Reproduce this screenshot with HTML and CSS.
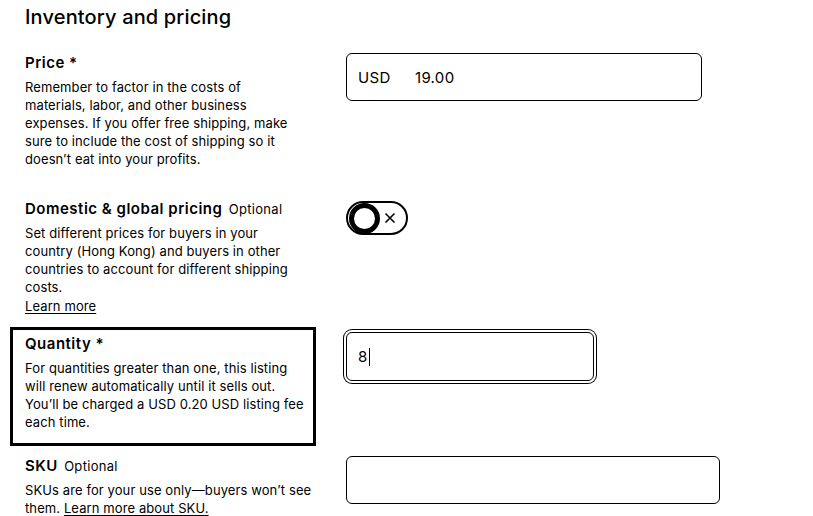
FILE: index.html
```html
<!DOCTYPE html>
<html>
<head>
<meta charset="utf-8">
<link rel="stylesheet" href="styles.css">
</head>
<body>
<div class="page">
  <h1 class="title">Inventory and pricing</h1>

  <div class="row row-price">
    <div class="info">
      <div class="label">Price <span class="req">*</span></div>
      <p class="desc">Remember to factor in the costs of materials, labor, and other business expenses. If you offer free shipping, make sure to include the cost of shipping so it doesn’t eat into your profits.</p>
    </div>
    <div class="field">
      <div class="input input-price"><span class="cur">USD</span><span class="val">19.00</span></div>
    </div>
  </div>

  <div class="row row-domestic">
    <div class="info">
      <div class="label">Domestic &amp; global pricing <span class="opt">Optional</span></div>
      <p class="desc">Set different prices for buyers in your country (Hong Kong) and buyers in other countries to account for different shipping costs.</p>
      <a class="link">Learn more</a>
    </div>
    <div class="field">
      <div class="toggle">
        <span class="knob"></span>
        <svg class="x" width="12" height="12" viewBox="0 0 12 12"><path d="M1.5 1.5 L10.5 10.5 M10.5 1.5 L1.5 10.5" stroke="#000" stroke-width="1.6" fill="none"/></svg>
      </div>
    </div>
  </div>

  <div class="row row-qty">
    <div class="info info-focus">
      <div class="label">Quantity <span class="req">*</span></div>
      <p class="desc">For quantities greater than one, this listing will renew automatically until it sells out. You’ll be charged a USD 0.20 USD listing fee each time.</p>
    </div>
    <div class="field">
      <div class="input input-qty"><span class="val">8</span><span class="caret"></span></div>
    </div>
  </div>

  <div class="row row-sku">
    <div class="info">
      <div class="label">SKU <span class="opt">Optional</span></div>
      <p class="desc">SKUs are for your use only—buyers won’t see them. <a class="link">Learn more about SKU.</a></p>
    </div>
    <div class="field">
      <div class="input input-sku"></div>
    </div>
  </div>
</div>
</body>
</html>
```

FILE: styles.css
```css
* { box-sizing: border-box; }
html, body { margin: 0; padding: 0; background: #fff; }
body {
  font-family: Inter, "Noto Sans", "Liberation Sans", sans-serif;
  color: #000;
  width: 813px;
  height: 516px;
  overflow: hidden;
}
.page { padding: 3px 0 0 25px; }
.title {
  margin: 0;
  font-size: 20px;
  line-height: 28px;
  font-weight: 500;
  letter-spacing: 0.15px;
}
.row {
  display: flex;
  align-items: flex-start;
}
.info { width: 276px; flex: none; }
.field { margin-left: 45px; }
.label {
  font-size: 15px;
  line-height: 20px;
  font-weight: 600;
  letter-spacing: 0.5px;
  white-space: nowrap;
}
.opt { font-size: 13px; font-weight: 400; margin-left: 2px; letter-spacing: 0.3px; }
.desc {
  margin: 5px 0 0;
  font-size: 13px;
  line-height: 18px;
  letter-spacing: 0.1px;
}
.link { color: #000; text-decoration: underline; text-underline-offset: 2px; font-size: 13px; line-height: 18px; letter-spacing: 0.1px; }
.row-domestic .link { display: block; margin-top: 1px; }

.row-price { margin-top: 22px; }
.row-domestic { margin-top: 31px; }
.row-qty { margin-top: 12px; }
.row-sku { margin-top: 10px; }
.row-sku .info { width: 290px; }
.row-sku .field { margin-left: 31px; }

.input {
  border: 1px solid #000;
  border-radius: 6px;
  background: #fff;
  display: flex;
  align-items: center;
  font-size: 15px;
  letter-spacing: 0.3px;
}
.input-price { width: 356px; height: 48px; padding-left: 11px; margin-top: 0; }
.cur { width: 57px; }
.input-qty {
  width: 248px;
  height: 49px;
  padding-left: 11px;
  margin-top: 5px;
  box-shadow: 0 0 0 2px #fff, 0 0 0 3px #000;
}
.caret { display: inline-block; width: 1px; height: 18px; background: #000; margin-left: 1px; }
.input-sku { width: 374px; height: 48px; margin-top: 0; }

.info-focus {
  border: 3px solid #000;
  margin-left: -15px;
  width: 306px;
  padding: 4px 6px 12px 12px;
}
.row-qty .field { margin-left: 30px; }

.toggle {
  width: 62px;
  height: 34px;
  border: 2px solid #000;
  border-radius: 17px;
  display: flex;
  align-items: center;
  padding-left: 1px;
  margin-top: 2px;
}
.knob {
  width: 31px;
  height: 31px;
  border-radius: 50%;
  border: 5px solid #000;
  background: #fff;
}
.x { margin-left: 4px; }
```
